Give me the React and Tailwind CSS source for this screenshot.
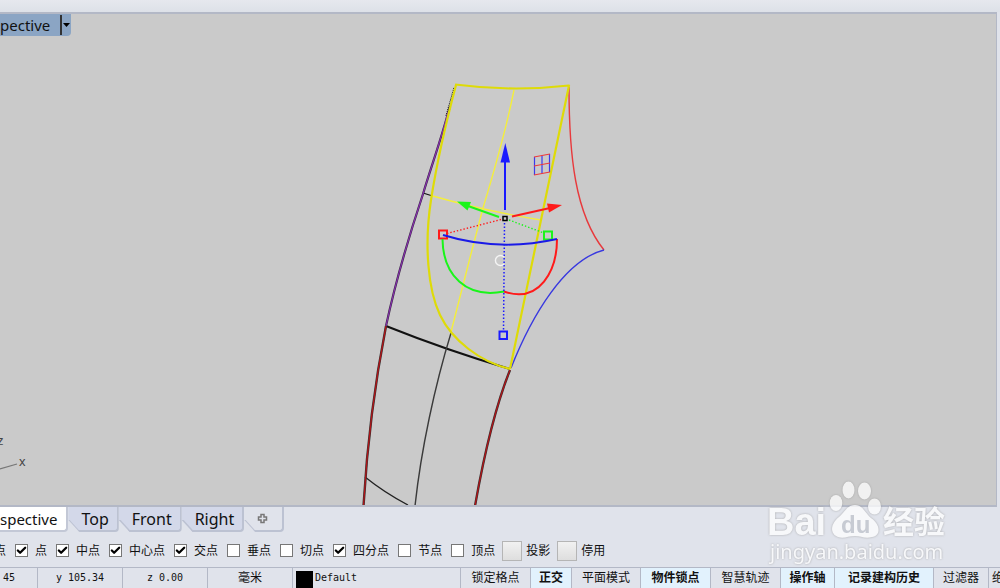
import React from "react";
import { Check } from "lucide-react";

const tabs = ["Top", "Front", "Right"];

const snaps = [
  { name: "点", on: true },
  { name: "中点", on: true },
  { name: "中心点", on: true },
  { name: "交点", on: true },
  { name: "垂点", on: false },
  { name: "切点", on: false },
  { name: "四分点", on: true },
  { name: "节点", on: false },
  { name: "顶点", on: false },
];

const modes = [
  { name: "锁定格点", width: "w-[70px]", on: false },
  { name: "正交", width: "w-[41px]", on: true },
  { name: "平面模式", width: "w-[69px]", on: false },
  { name: "物件锁点", width: "w-[70px]", on: true },
  { name: "智慧轨迹", width: "w-[70px]", on: false },
  { name: "操作轴", width: "w-[54px]", on: true },
  { name: "记录建构历史", width: "w-[99px]", on: true },
  { name: "过滤器", width: "w-[55px]", on: false },
];

function Model() {
  return (
    <svg className="min-h-0 w-full flex-1" viewBox="0 14 996 491" fill="none">
      {/* lower surface */}
      <g stroke="#111" strokeWidth="2">
        <path d="M386 326 Q446 350 510 369" />
        <path d="M451 333 C435 385 421 450 415 506" stroke="#3a3a3a" strokeWidth="1.4" />
        <path d="M365 477 Q385 493 408 505" stroke="#222" strokeWidth="1.3" />
        <path d="M423 193 L431 195.500" strokeWidth="1.3" />
        <path d="M454 88 L446 116" strokeWidth="1.2" strokeDasharray="1 1" />
      </g>
      <g stroke="#333" strokeWidth="2.400">
        <path d="M386 326 C375 382 367 445 363.500 506" />
        <path d="M510 370 C496 405 484 455 475 506" />
      </g>
      <g stroke="#b01418" strokeWidth="1.300">
        <path d="M386 326 C375 382 367 445 363.500 506" />
        <path d="M510 370 C496 405 484 455 475 506" />
      </g>
      <path d="M450 106 C442 137 430 170 423 194 C411 230 397 275 386 326" stroke="#3c2948" strokeWidth="2.200" />
      <path d="M448 112 C442 137 430 170 423 194 C411 230 397 275 386 326" stroke="#8930b0" strokeWidth="1.100" />

      {/* side curves */}
      <path d="M569 87 C569 155 575 214 604 250" stroke="#e8393c" strokeWidth="1.400" />
      <path d="M604 250 C565 260 532 315 511 368" stroke="#3838e0" strokeWidth="1.400" />

      {/* selected surface */}
      <g stroke="#f4ee3c" strokeWidth="1.400">
        <path d="M514 90 C506 130 496 165 483 208 C472 250 462 288 451 332" />
        <path d="M431 195.500 Q485 211 541 220" />
      </g>
      <g stroke="#dedb08" strokeWidth="2.200" strokeLinejoin="round">
        <path d="M456 85 C448 115 438 155 431 200 C424 245 428 290 440 315 C452 340 480 362 510 369" />
        <path d="M455 84.500 Q512 92 569 85.500 C557 145 541 222 510 369" />
      </g>

      {/* gumball */}
      <g stroke="#ff1a1a" strokeWidth="2">
        <path d="M512 216.500 L550 208" />
        <path d="M562 205 L547 203.500 L549 212.500 Z" fill="#ff1a1a" stroke="none" />
        <path d="M501 219.500 L447 233.500" strokeWidth="1.400" strokeDasharray="1.400 2" />
        <path d="M557 239 C557 270 540 304 504 291.500" />
        <rect x="439" y="230.500" width="8" height="8" />
      </g>
      <g stroke="#1af51a" strokeWidth="2">
        <path d="M499 217 L468 206" />
        <path d="M457 201.500 L471 202 L467.500 210.500 Z" fill="#1af51a" stroke="none" />
        <path d="M509 220 L544 233" strokeWidth="1.400" strokeDasharray="1.400 2" />
        <path d="M442.500 239 C443 275 466 299 504 291.500" />
        <rect x="544" y="231.500" width="8" height="8" />
      </g>
      <g stroke="#1a1aff" strokeWidth="2">
        <path d="M505 210 L505 162" />
        <path d="M505.300 143 L500.500 162.500 L510 162.500 Z" fill="#1a1aff" stroke="none" />
        <path d="M504.500 223 L503.500 330" strokeWidth="1.500" strokeDasharray="1.500 2" />
        <path d="M443 235 Q498 252 557 239" stroke="#1a1ae6" />
        <rect x="499.500" y="331.500" width="7.500" height="7.500" />
      </g>
      <rect x="503" y="216.500" width="4" height="4" stroke="#000" strokeWidth="1.500" />
      <path d="M504 257 A5 5 0 1 0 504 264" stroke="#f4f4f4" strokeWidth="1.400" />
      <g strokeWidth="1.200">
        <path d="M534.500 157 V175 M542 155.500 V173.500 M549.500 154 V172" stroke="#3a3aee" />
        <path d="M534 157 L550 154 M534 166 L550 163 M534 175 L550 172" stroke="#ee3a3a" />
      </g>

      {/* world axes */}
      <path d="M0 469 L17 464" stroke="#777" strokeWidth="1.200" />
      <g fill="#444" fontSize="13" fontFamily="Liberation Sans, sans-serif">
        <text x="-3" y="445">z</text>
        <text x="19" y="466">x</text>
      </g>
    </svg>
  );
}

function Watermark() {
  return (
    <svg
      className="pointer-events-none absolute right-10 bottom-5 h-[90px] w-[200px] drop-shadow-[0_0_1px_#999]"
      viewBox="0 0 200 90"
      fill="#fff"
      opacity="0.75"
    >
      <text x="7" y="57" fontSize="38" fontWeight="700" fontFamily="Liberation Sans, sans-serif">
        Bai
      </text>
      <ellipse cx="76" cy="25" rx="6.300" ry="8" />
      <ellipse cx="88.500" cy="12" rx="6" ry="8.500" />
      <ellipse cx="104.500" cy="13" rx="6.500" ry="8.500" />
      <ellipse cx="114.500" cy="28.500" rx="6.500" ry="8" />
      <path d="M95 27 C103 27 105 35 111 40 C121 47 121 58 112 59 C105 61 101 58 95 58 C88 58 84 61 78 59 C70 56 70 46 79 39 C85 34 87 27 95 27 Z" />
      <text x="81" y="55" fontSize="24" fontWeight="700" fill="#bfc3cc" fontFamily="Liberation Sans, sans-serif">
        du
      </text>
      <text x="123" y="55" fontSize="31" fontWeight="700" fontFamily="Noto Sans CJK SC, sans-serif">
        经验
      </text>
      <text x="10" y="81" fontSize="20" fontFamily="Noto Sans, sans-serif">
        jingyan.baidu.com
      </text>
    </svg>
  );
}

function Tab({ label, children }) {
  return (
    <button
      type="button"
      aria-label={label}
      className={
        "relative h-[25px] rounded-br border-r-2 border-b-2 border-[#bcc2d2] pr-2 pl-[13px] [clip-path:polygon(0_0,100%_0,100%_100%,11px_100%,0_13px)] " +
        (label ? "bg-[#e0e3eb] pr-3.5" : "bg-[#d3d8e9]")
      }
    >
      {children}
      <svg className="absolute -bottom-0.5 left-0 h-3 w-3" viewBox="0 0 12 12" aria-hidden="true">
        <path d="M0 0 L11 12" stroke="#bcc2d2" strokeWidth="2.500" />
      </svg>
    </button>
  );
}

function Snap({ name, on }) {
  return (
    <label className="flex shrink-0 items-center gap-[7px]">
      <span className="grid">
        <input
          type="checkbox"
          defaultChecked={on}
          className="peer col-start-1 row-start-1 h-[13px] w-[13px] appearance-none border border-[#777] bg-white"
        />
        <Check
          className="pointer-events-none invisible col-start-1 row-start-1 h-[13px] w-[13px] p-px text-black peer-checked:visible"
          strokeWidth={5}
        />
      </span>
      {name}
    </label>
  );
}

export default function App() {
  return (
    <div className="relative flex h-screen flex-col overflow-hidden bg-[#e0e3eb] font-['Liberation_Sans','Noto_Sans_CJK_SC',sans-serif] text-xs text-[#111]">
      <header className="h-3 shrink-0 bg-linear-to-b from-[#e6e8ee] to-[#dde1e8]" />

      <main className="relative mr-[3px] flex min-h-0 flex-1 flex-col border-y-2 border-r border-[#b3b8c6] bg-[#cacaca]">
        <Model />
        <button
          type="button"
          className="absolute top-0 left-0 flex h-[22px] items-center rounded-br bg-[#8ba5c4] font-['Noto_Sans',sans-serif] text-[15px] leading-5"
        >
          pective
          <span className="ml-2.5 flex h-5 items-center border-l-2 border-[#333]">
            <svg className="mr-px h-2 w-2" viewBox="0 0 8 8" aria-hidden="true">
              <path d="M1 2 H8 L4.500 6 Z" />
            </svg>
          </span>
        </button>
      </main>

      <nav className="flex h-[25px] shrink-0 font-['Noto_Sans',sans-serif] text-[16px] leading-5">
        <button type="button" className="h-[25px] rounded-br border-r-2 border-b-2 border-[#c3c8d6] bg-white pr-[9px] text-[15px]">
          spective
        </button>
        {tabs.map((t) => (
          <Tab key={t}>{t}</Tab>
        ))}
        <Tab label="+">
          <svg className="mx-auto h-[11px] w-[11px]" viewBox="0 0 11 11" fill="none" stroke="#777" aria-hidden="true">
            <path d="M4 1.500 H7 V4 H9.500 V7 H7 V9.500 H4 V7 H1.500 V4 H4 Z" strokeWidth="1.500" />
          </svg>
        </Tab>
      </nav>

      <div className="flex h-[35px] shrink-0 items-center gap-[9px] overflow-hidden pt-0.5">
        <span className="-ml-1.5 shrink-0">点</span>
        {snaps.map((s) => (
          <Snap key={s.name} name={s.name} on={s.on} />
        ))}
        {["投影", "停用"].map((n) => (
          <div key={n} className="-ml-0.5 flex shrink-0 items-center gap-1">
            <button
              id={n}
              type="button"
              aria-label={n}
              className="h-5 w-5 border border-[#b5b5b5] bg-linear-to-b from-[#f1f1f1] to-[#dedede]"
            />
            <label htmlFor={n}>{n}</label>
          </div>
        ))}
      </div>

      <footer className="flex h-[21px] shrink-0 overflow-hidden border-t border-[#b3b8c6] leading-5 whitespace-nowrap">
        <div className="flex shrink-0 divide-x divide-[#b3b8c6] border-r border-[#b3b8c6] text-center font-['DejaVu_Sans_Mono','Noto_Sans_CJK_SC',monospace] text-[10px]">
          <div className="w-[38px] pl-[3px] text-left">45</div>
          <div className="w-[85px]">y 105.34</div>
          <div className="w-[85px]">z 0.00</div>
          <div className="w-[85px] text-xs leading-5">毫米</div>
          <div className="flex w-[167px] items-end pl-[3px]">
            <span className="h-[17px] w-[17px] bg-black" />
            <span className="self-center pl-0.5">Default</span>
          </div>
        </div>
        {modes.map((m) => (
          <button
            key={m.name}
            type="button"
            className={"shrink-0 border-r border-[#b3b8c6] " + m.width + (m.on ? " bg-[#e2f2fd] font-bold" : "")}
          >
            {m.name}
          </button>
        ))}
        <button type="button" className="shrink-0 pl-[3px]">绝对</button>
      </footer>

      <Watermark />
    </div>
  );
}
